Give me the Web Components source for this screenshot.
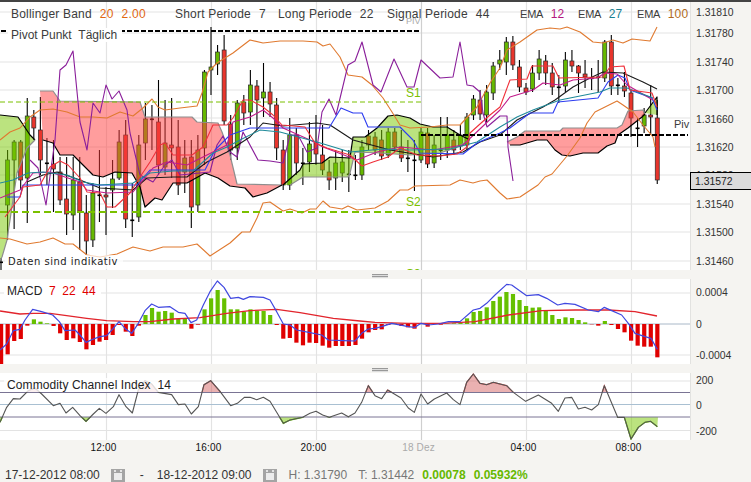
<!DOCTYPE html>
<html>
<head>
<meta charset="utf-8">
<title>Chart</title>
<style>
    html, body { margin: 0; background: #f5f4f1; }
</style>
</head>
<body>
<trade-screen>
    <chart-pane style="height:268px">
        <price-canvas></price-canvas>
        <chart-legend>
            <legend-group width="164" label="Bollinger Band" color="#e0660f" v1="20" v2="2.00"></legend-group>
            <legend-group width="103" label="Short Periode" v1="7"></legend-group>
            <legend-group width="109" label="Long Periode" v1="22"></legend-group>
            <legend-group width="133" label="Signal Periode" v1="44"></legend-group>
            <legend-group width="58" narrow label="EMA" color="#b4187e" v1="12"></legend-group>
            <legend-group width="59" narrow label="EMA" color="#1a8090" v1="27"></legend-group>
            <legend-group narrow label="EMA" color="#b06a22" v1="100"></legend-group>
        </chart-legend>
        <chart-label x="8" y="28" bg="#fff">Pivot Punkt &nbsp;Täglich</chart-label>
        <chart-label x="403" y="14" color="#aaa" size="9">PIV</chart-label>
        <chart-label x="403" y="86" color="#7ac000">S1</chart-label>
        <chart-label x="403" y="195" color="#7ac000">S2</chart-label>
        <chart-label x="403" y="267" color="#7ac000">S3</chart-label>
        <chart-label x="671" y="117" size="11">Piv</chart-label>
        <chart-label x="5" y="255" size="10" spacing="0.5" font="'DejaVu Sans'" bg="rgba(255,255,255,.7)" color="#222">Daten sind indikativ</chart-label>
        <axis-tick slot="axis" at="11">1.31810</axis-tick>
        <axis-tick slot="axis" at="32">1.31780</axis-tick>
        <axis-tick slot="axis" at="61">1.31740</axis-tick>
        <axis-tick slot="axis" at="89">1.31700</axis-tick>
        <axis-tick slot="axis" at="118">1.31660</axis-tick>
        <axis-tick slot="axis" at="146">1.31620</axis-tick>
        <axis-tick slot="axis" at="174">1.31580</axis-tick>
        <axis-tick slot="axis" at="203">1.31540</axis-tick>
        <axis-tick slot="axis" at="231">1.31500</axis-tick>
        <axis-tick slot="axis" at="260">1.31460</axis-tick>
        <price-marker slot="axis">1.31572</price-marker>
    </chart-pane>
    <pane-grip style="height:9px"></pane-grip>
    <chart-pane style="height:85px" top="279">
        <macd-canvas></macd-canvas>
        <chart-label x="4" y="284" top="279" size="12" color="#222" bg="#fff">MACD &nbsp;<red-val>7 &nbsp;22 &nbsp;44</red-val></chart-label>
        <axis-tick slot="axis" top="279" at="292">0.0004</axis-tick>
        <axis-tick slot="axis" top="279" at="324">0</axis-tick>
        <axis-tick slot="axis" top="279" at="355">-0.0004</axis-tick>
    </chart-pane>
    <pane-grip style="height:10px"></pane-grip>
    <chart-pane style="height:67px" top="374">
        <cci-canvas></cci-canvas>
        <chart-label x="4" y="379" top="374" size="12" spacing="0.1" color="#222" bg="rgba(255,255,255,.8)">Commodity Channel Index &nbsp;14</chart-label>
        <axis-tick slot="axis" top="374" at="380">200</axis-tick>
        <axis-tick slot="axis" top="374" at="405">0</axis-tick>
        <axis-tick slot="axis" top="374" at="431">-200</axis-tick>
    </chart-pane>
    <time-axis>
        <span>12:00</span><span>16:00</span><span>20:00</span><span class="day">18 Dez</span><span>04:00</span><span>08:00</span>
    </time-axis>
    <status-bar>
        <span>17-12-2012 08:00</span>
        <calendar-icon></calendar-icon>
        <span class="dash">-</span>
        <span>18-12-2012 09:00</span>
        <calendar-icon></calendar-icon>
        <span class="stat">H: 1.31790</span>
        <span class="stat low">T: 1.31442</span>
        <span class="up">0.00078</span>
        <span class="up pct">0.05932%</span>
    </status-bar>
</trade-screen>

<style>
    time-axis span { width: 105px; text-align: center; letter-spacing: .15px; }
    time-axis .day { color: #aaa; }
    status-bar .dash { margin: 0 13px 0 15px; }
    status-bar calendar-icon { margin-left: 11px; }
    status-bar .stat { color: #777; margin-left: 12px; }
    status-bar .stat.low { margin-left: 11px; }
    status-bar .up { color: #66b800; font-weight: bold; margin-left: 8px; }
    status-bar .pct { margin-left: 8px; }
    red-val { color: #e00000; }
</style>

<script>
const NS = 'http://www.w3.org/2000/svg'
const SANS = "'Liberation Sans', Arial, sans-serif"

// candles: body top, body bottom, wick top, wick bottom, g / r / d (doji)
const CANDLES = [
    [262,263,258,270,'d'],[160,205,150,240,'g'],[142,160,140,229,'g'],[142,180,140,190,'r'],[116,178,98,223,'g'],
    [117,128,110,140,'r'],[130,160,97,175,'r'],[163,164,138,185,'d'],[164,169,140,212,'r'],[172,200,157,205,'r'],
    [199,214,157,235,'r'],[180,215,157,230,'g'],[182,211,157,250,'r'],[213,241,195,255,'r'],[193,240,183,247,'g'],
    [195,196,150,222,'d'],[195,197,187,235,'r'],[179,190,160,208,'g'],[142,178,130,180,'g'],[135,219,120,228,'r'],
    [220,221,183,237,'d'],[145,217,135,222,'g'],[119,143,103,160,'g'],[119,120,105,150,'d'],[122,165,80,175,'r'],
    [143,167,100,175,'g'],[145,148,98,178,'r'],[147,185,120,195,'r'],[158,172,140,193,'g'],[157,207,140,228,'r'],
    [150,205,135,212,'g'],[72,148,70,165,'g'],[67,70,27,95,'g'],[52,64,45,75,'g'],[50,121,35,125,'r'],
    [124,150,115,160,'r'],[103,148,100,160,'g'],[102,113,95,125,'r'],[85,112,70,125,'g'],[86,100,80,130,'r'],
    [92,98,63,117,'g'],[92,104,82,117,'r'],[105,148,98,160,'r'],[150,185,140,190,'r'],[135,185,118,190,'g'],
    [135,163,128,175,'r'],[163,164,148,185,'d'],[144,162,122,172,'g'],[143,154,115,165,'r'],[155,170,125,175,'r'],
    [172,180,160,190,'r'],[163,178,150,190,'g'],[162,173,150,182,'g'],[174,175,150,192,'d'],[175,176,155,180,'d'],
    [147,175,140,180,'g'],[136,145,130,150,'r'],[137,150,132,155,'r'],[140,156,130,160,'r'],[132,155,128,158,'g'],
    [132,147,128,152,'r'],[147,158,130,162,'r'],[158,159,140,172,'d'],[160,161,140,191,'d'],[132,160,128,163,'g'],
    [133,164,128,168,'r'],[145,163,135,168,'g'],[150,151,117,160,'d'],[135,150,117,158,'g'],[140,150,130,155,'r'],
    [135,146,125,150,'g'],[117,145,113,150,'g'],[99,115,95,120,'g'],[100,114,90,120,'r'],[92,115,85,122,'g'],
    [66,93,62,100,'g'],[60,64,50,70,'g'],[42,62,37,75,'g'],[42,65,36,70,'r'],[67,87,60,92,'r'],
    [88,92,83,95,'r'],[73,89,65,92,'g'],[59,73,50,80,'g'],[61,73,55,85,'r'],[73,87,63,95,'r'],
    [87,88,75,103,'d'],[60,86,52,92,'g'],[61,66,50,72,'r'],[66,73,65,93,'r'],[74,77,60,88,'r'],
    [78,79,68,90,'d'],[77,78,60,92,'d'],[42,78,40,82,'g'],[42,86,35,95,'r'],[85,86,78,95,'d'],
    [86,91,72,97,'r'],[93,118,90,137,'r'],[128,129,118,147,'d'],[115,126,108,133,'g'],[115,117,85,135,'r'],
    [118,180,100,184,'r'],
]

const CLOUDS = {
    redA: '40,91 53,91 60,101 140,102 145,117 192,117 197,122 218,123 222,132 230,155 237,184 282,185 267,193 253,197 245,188 230,186 218,178 205,173 187,183 173,183 162,200 155,198 145,207 140,187 132,173 115,172 103,177 93,175 83,165 73,155 60,155 53,143 43,140',
    greenA: '283,185 300,170 303,164 322,163 330,157 350,158 353,137 365,137 377,128 388,116 397,115 410,118 420,124 433,127 447,127 460,135 470,140 455,148 440,153 410,155 380,153 355,152 350,173 348,177 303,177 290,185',
    greenB: '0,115 18,117 30,135 35,140 27,148 17,173 10,220 7,240 2,257 0,260',
    redB: '507,142 517,137 525,131 560,131 563,128 617,128 622,125 628,111 643,110 645,114 642,117 628,128 618,135 615,143 607,146 598,153 583,153 570,156 562,155 555,150 547,140 537,140 520,145 510,145',
    greenC: '645,113 657,97 657,115',
}

const LINES = [
    ['#e07a30', '0,140 10,132 20,128 30,117 40,110 53,109 67,112 80,117 93,117 107,118 120,112 133,116 143,108 152,99 158,107 165,110 180,108 197,106 202,93 208,72 217,63 233,53 250,40 263,43 280,41 303,41 317,42 323,46 330,44 340,57 348,75 362,77 372,85 383,98 392,112 400,125 410,128 430,127 447,125 460,125 477,107 490,83 500,68 507,50 520,42 537,30 550,28 560,29 567,27 580,32 593,42 603,43 613,40 623,43 632,39 650,41 657,27'],
    ['#e07a30', '0,238 10,239 27,244 40,242 53,238 65,244 73,244 87,255 100,257 117,254 133,247 150,251 163,247 183,247 197,244 210,256 230,243 242,232 250,232 257,218 263,203 270,202 283,211 290,209 302,213 310,209 316,209 323,201 330,207 342,209 348,206 357,210 375,208 388,201 400,190 408,190 415,186 450,185 460,180 473,183 480,181 487,180 500,193 507,199 520,197 538,185 545,177 552,174 567,156 580,138 587,123 595,112 603,108 617,101 623,105 633,112 643,125 653,137 655,147'],
    ['#8a1e9a', '30,160 38,168 46,205 55,140 60,70 66,65 73,51 80,122 87,150 93,103 100,113 106,85 112,99 119,91 127,110 130,133 140,175 153,182 165,165 172,160 180,175 200,173 210,172 217,145 223,136 230,152 237,157 243,132 258,160 270,161 283,163 290,135 298,135 307,152 317,148 322,112 329,99 336,115 348,65 355,61 362,42 373,85 381,92 394,59 407,87 414,87 421,60 440,78 453,77 460,42 467,85 473,86 480,92 483,113 487,127 500,116 507,116 508,147 513,181'],
    ['#1a1a1a', '27,182 43,175 57,172 80,180 100,188 133,190 147,178 173,177 187,177 207,162 227,152 250,137 263,123 283,126 317,123 330,125 353,140 390,150 433,157 463,152 480,142 500,135 517,120 543,107 555,100 573,87 590,78 603,72 623,73 643,82 657,89'],
    ['#2c3cf0', '7,197 20,197 23,185 137,185 150,170 205,170 215,150 230,135 250,128 329,128 341,108 353,113 362,113 368,127 400,127 413,140 420,153 463,154 477,143 500,133 510,128 530,113 553,113 558,102 598,98 608,82 618,75 625,78 630,90 652,98 657,110'],
    ['#c01a8a', '0,198 20,190 33,173 50,172 80,182 87,190 107,193 133,192 153,168 167,162 187,165 207,155 227,145 233,122 250,117 263,110 273,118 283,128 310,140 323,147 357,160 377,152 400,147 433,150 463,145 500,110 510,97 533,90 543,83 560,85 573,80 597,78 605,73 617,74 627,85 653,100'],
    ['#1f8a9a', '0,183 13,180 28,173 43,172 67,175 83,182 100,185 133,183 150,173 173,171 193,171 213,153 227,147 240,140 260,130 280,132 317,142 350,152 383,149 410,150 450,149 477,142 500,127 517,117 533,110 560,100 600,92 610,88 627,88 653,98'],
    ['#f0303a', '5,217 20,197 23,187 40,185 50,167 60,161 68,165 80,178 87,192 100,193 107,207 115,207 130,193 140,177 150,162 160,145 165,143 173,155 192,155 203,147 213,125 227,125 233,118 243,100 250,100 263,107 273,115 282,125 305,127 315,143 327,148 350,155 362,166 373,162 388,157 400,148 417,155 440,156 457,154 467,147 470,133 490,115 500,107 510,80 527,79 532,66 553,66 559,78 603,77 610,67 624,66 630,90 652,93 657,107'],
]

const MACD_BARS = [-120,-91,-51,-45,-5,14,7,2,-6,-28,-48,-43,-54,-76,-63,-53,-48,-33,-3,-23,-36,-5,27,48,37,39,34,15,16,-14,-2,44,77,102,77,44,44,37,44,40,39,27,-3,-44,-42,-56,-64,-56,-57,-65,-71,-66,-66,-66,-63,-44,-25,-18,-16,-3,2,-6,-10,-14,1,-8,2,-2,1,2,3,17,36,39,50,69,82,96,90,72,54,49,50,42,27,15,20,18,12,5,-1,-5,9,-3,-15,-25,-50,-65,-68,-68,-100]

// the lower panes were read off at 3x, so keep those numbers and scale them
const zoomed = (pts, left, baseY) => pts.map(([x, y]) => `${left + x / 3},${baseY + y / 3}`).join(' ')

const MACD_LINE = zoomed([[0,240],[20,222],[40,182],[60,178],[75,150],[98,118],[125,125],[158,135],[178,155],[195,182],[225,180],[240,195],[258,217],[280,207],[300,200],[320,197],[340,175],[357,155],[378,178],[395,190],[415,160],[435,122],[455,102],[475,112],[510,110],[535,127],[555,130],[573,158],[590,150],[610,105],[630,65],[652,33],[672,52],[692,85],[715,82],[730,88],[750,80],[790,82],[810,90],[830,125],[850,162],[870,165],[890,180],[930,188],[965,195],[985,210],[1030,212],[1065,213],[1085,190],[1105,177],[1125,175],[1145,170],[1175,160],[1225,170],[1245,172],[1263,160],[1285,165],[1315,162],[1345,155],[1380,155],[1420,120],[1440,115],[1460,100],[1485,75],[1520,43],[1535,45],[1580,77],[1615,74],[1640,85],[1673,105],[1695,100],[1725,103],[1765,120],[1795,125],[1813,112],[1835,122],[1865,135],[1885,160],[1905,190],[1935,200],[1953,205],[1972,238]], 0, 270)
const MACD_SIGNAL = zoomed([[0,123],[60,132],[100,130],[150,130],[200,137],[260,145],[320,152],[400,155],[450,155],[520,147],[600,143],[680,130],[750,122],[830,118],[900,128],[1000,145],[1080,153],[1125,157],[1225,160],[1325,160],[1425,155],[1525,135],[1625,122],[1725,120],[1825,120],[1905,125],[1971,138]], 0, 270)
const CCI_LINE = [[0,175],[20,130],[40,104],[60,105],[85,80],[105,72],[125,90],[160,125],[180,118],[198,147],[218,130],[240,155],[258,172],[280,150],[298,133],[318,148],[340,128],[357,92],[378,128],[397,147],[415,78],[435,50],[455,60],[475,85],[515,92],[535,122],[555,120],[574,150],[595,128],[612,62],[632,50],[660,82],[692,125],[712,118],[733,100],[750,100],[770,107],[790,100],[810,112],[830,145],[850,178],[870,168],[908,160],[930,148],[948,142],[968,153],[988,160],[1025,147],[1045,158],[1065,147],[1085,115],[1105,65],[1125,95],[1145,104],[1163,78],[1183,90],[1203,102],[1225,132],[1243,145],[1263,90],[1283,120],[1303,105],[1340,87],[1360,107],[1380,122],[1400,55],[1420,30],[1440,58],[1460,62],[1480,55],[1520,65],[1540,85],[1577,112],[1615,93],[1655,118],[1675,142],[1695,102],[1715,100],[1735,135],[1755,130],[1775,138],[1795,122],[1813,65],[1853,160],[1873,160],[1893,225],[1915,190],[1935,175],[1952,172],[1972,188]]

function gridLines(top, bottom, rows) {
    let out = ''
    for (const y of rows) {
        out += `<line x1="0" x2="690" y1="${y}" y2="${y}" stroke="#e3e3e3" stroke-width="1.2"/>`
    }
    for (const x of [106, 211, 316, 421, 526, 631]) {
        const stroke = x === 421 ? '#cfcfcf' : '#e3e3e3'
        out += `<line x1="${x + 0.5}" x2="${x + 0.5}" y1="${top}" y2="${bottom}" stroke="${stroke}" stroke-width="1.2"/>`
    }
    return out
}

function svgBox(top, height, content) {
    return `<style>:host { display: block; width: 690px; height: ${height}px; } svg { display: block; }</style>
    <svg xmlns="${NS}" width="690" height="${height}" viewBox="0 ${top} 690 ${height}">${content}</svg>`
}

const line = (pts, stroke, w = 1.1) => `<polyline points="${pts}" fill="none" stroke="${stroke}" stroke-width="${w}" stroke-linejoin="round"/>`

class PriceCanvas extends HTMLElement {
    connectedCallback() {
        let body = gridLines(2, 270, [12, 33, 62, 90, 118, 147, 175, 204, 232, 261])

        CANDLES.forEach(([top, bottom, high, low, kind], i) => {
            const x = 1 + i * 6.5625
            body += `<line x1="${x}" x2="${x}" y1="${high}" y2="${low}" stroke="#000" stroke-width="1.1"/>`
            if (kind === 'd') {
                body += `<rect x="${x - 2}" y="${top - 0.5}" width="4" height="1.6" fill="#000"/>`
            } else {
                const fill = kind === 'g' ? '#66b800' : '#e8352c'
                body += `<rect x="${x - 2}" y="${top}" width="4" height="${bottom - top}" fill="${fill}" stroke="#2a2a2a" stroke-width="0.7"/>`
            }
        })

        const red = 'rgba(255,60,60,.5)'
        const green = 'rgba(120,200,0,.5)'
        for (const [name, pts] of Object.entries(CLOUDS)) {
            const isRed = name.startsWith('red')
            body += `<polygon points="${pts}" fill="${isRed ? red : green}"/>`
            const half = pts.split(' ')
            const cut = isRed ? half.findIndex(p => p.startsWith('282,') || p.startsWith('645,')) + 1 : half.findIndex(p => p.startsWith('470,') || p.startsWith('657,115') || p.startsWith('35,')) + 1
            body += line(half.slice(0, cut).join(' '), isRed ? '#8e8e8e' : '#000', 1.2)
            body += line(half.slice(cut - 1).join(' '), isRed ? '#000' : '#8e8e8e', 1.2)
        }

        for (const [stroke, pts] of LINES) {
            body += line(pts, stroke)
        }

        body += `<line x1="0" x2="421" y1="102" y2="102" stroke="#7ac000" stroke-width="1" stroke-dasharray="5 3"/>`
        body += `<line x1="0" x2="421" y1="212" y2="212" stroke="#7ac000" stroke-width="2" stroke-dasharray="7 4"/>`
        body += `<line x1="1" x2="421" y1="31" y2="31" stroke="#000" stroke-width="2" stroke-dasharray="5 2"/>`
        body += `<line x1="421" x2="688" y1="135" y2="135" stroke="#000" stroke-width="2" stroke-dasharray="5 2"/>`

        this.attachShadow({ mode: 'open' }).innerHTML = svgBox(2, 268, body)
    }
}

class MacdCanvas extends HTMLElement {
    connectedCallback() {
        let body = gridLines(279, 364, [293, 355])
        body += `<line x1="0" x2="690" y1="324" y2="324" stroke="#a9b8c8" stroke-width="1"/>`
        MACD_BARS.forEach((v, i) => {
            const x = 1 + i * 6.5625
            const h = Math.abs(v) / 3
            const y = v < 0 ? 324 : 324 - h
            body += `<rect x="${x - 2}" y="${y}" width="4.2" height="${h}" fill="${v < 0 ? '#e00000' : '#66c000'}"/>`
        })
        body += line(MACD_SIGNAL, '#e2242c', 1.3)
        body += line(MACD_LINE, '#4048e0', 1.2)
        this.attachShadow({ mode: 'open' }).innerHTML = svgBox(279, 85, body)
    }
}

class CciCanvas extends HTMLElement {
    connectedCallback() {
        let body = gridLines(374, 441, [382, 431.5])
        const pts = zoomed(CCI_LINE, 0, 365)
        const hi = 393.5
        const lo = 418
        const first = `0,${hi}`
        const last = `658,${hi}`
        body += `<defs><clipPath id="above"><rect x="0" y="374" width="690" height="${hi - 374}"/></clipPath>
            <clipPath id="below"><rect x="0" y="${lo}" width="690" height="${441 - lo}"/></clipPath></defs>`
        body += `<polygon clip-path="url(#above)" points="${first} ${pts} ${last}" fill="rgba(205,70,70,.42)"/>`
        body += `<polyline clip-path="url(#above)" points="${pts}" fill="none" stroke="#d05a5a" stroke-width="1.2"/>`
        body += `<polygon clip-path="url(#below)" points="0,${lo} ${pts} 658,${lo}" fill="rgba(120,200,0,.5)"/>`
        body += `<polyline clip-path="url(#below)" points="${pts}" fill="none" stroke="#66c000" stroke-width="1.3"/>`
        body += `<line x1="0" x2="690" y1="${hi}" y2="${hi}" stroke="#7a7494" stroke-width="1"/>`
        body += `<line x1="0" x2="690" y1="405.5" y2="405.5" stroke="#a9c0d2" stroke-width="1"/>`
        body += `<line x1="0" x2="690" y1="${lo}" y2="${lo}" stroke="#7a7494" stroke-width="1"/>`
        body += line(pts, '#555', 1.1)
        this.attachShadow({ mode: 'open' }).innerHTML = svgBox(374, 67, body)
    }
}

const templatePane = document.createElement('template')
templatePane.innerHTML = `
<style>
    :host { display: flex; position: relative; }
    #plot { position: relative; width: 690px; flex: none; background: #fff; box-shadow: 1px 0 0 #e2e2e0; overflow: hidden; }
    #axis { position: relative; flex: 1; }
</style>
<div id="plot"><slot></slot></div>
<div id="axis"><slot name="axis"></slot></div>
`

class ChartPane extends HTMLElement {
    connectedCallback() {
        this.attachShadow({ mode: 'open' }).appendChild(templatePane.content.cloneNode(true))
    }
}

class TradeScreen extends HTMLElement {
    connectedCallback() {
        this.attachShadow({ mode: 'open' }).innerHTML = `
        <style>
            :host { display: flex; flex-direction: column; width: 751px; height: 482px; overflow: hidden;
                border-top: 2px solid #444; box-sizing: border-box; font-family: ${SANS}; }
        </style>
        <slot></slot>`
    }
}

class PaneGrip extends HTMLElement {
    connectedCallback() {
        this.attachShadow({ mode: 'open' }).innerHTML = `
        <style>
            :host { display: flex; justify-content: center; align-items: flex-end; width: 690px; }
            div { width: 16px; height: 4px; margin-bottom: 1px; margin-left: 70px;
                background: repeating-linear-gradient(#999 0 1px, #ddd 1px 2px); }
        </style>
        <div></div>`
    }
}

class ChartLegend extends HTMLElement {
    connectedCallback() {
        this.attachShadow({ mode: 'open' }).innerHTML = `
        <style>
            :host { position: absolute; left: 11px; top: 5px; display: flex; white-space: nowrap;
                font-size: 12px; color: #3c3c3c; }
        </style>
        <slot></slot>`
    }
}

class LegendGroup extends HTMLElement {
    connectedCallback() {
        const w = this.getAttribute('width')
        const color = this.getAttribute('color') || '#3c3c3c'
        const narrow = this.hasAttribute('narrow')
        const values = [this.getAttribute('v1'), this.getAttribute('v2')].filter(Boolean)
        this.attachShadow({ mode: 'open' }).innerHTML = `
        <style>
            :host { display: flex; align-items: baseline; gap: ${narrow ? 7.5 : 8}px; ${w ? `width: ${w}px;` : ''} flex: none; letter-spacing: .2px; }
            span { ${narrow ? 'font-size: 11px; letter-spacing: -.2px;' : ''} }
            b { font-weight: normal; color: ${color}; }
        </style>
        <span>${this.getAttribute('label')}</span>${values.map(v => `<b>${v}</b>`).join('')}`
    }
}

// free labels that sit over the plot; y is given in page coordinates
class ChartLabel extends HTMLElement {
    connectedCallback() {
        const paneTop = Number(this.getAttribute('top') || 2)
        const font = this.getAttribute('font')
        this.attachShadow({ mode: 'open' }).innerHTML = `
        <style>
            :host { position: absolute; left: ${this.getAttribute('x')}px; top: ${this.getAttribute('y') - paneTop}px;
                padding: 0 5px 0 3px; white-space: nowrap; line-height: 14px;
                letter-spacing: ${this.getAttribute('spacing') || 0}px;
                font-size: ${this.getAttribute('size') || 12}px;
                ${font ? `font-family: ${font}, sans-serif;` : ''}
                color: ${this.getAttribute('color') || '#3c3c3c'};
                background: ${this.getAttribute('bg') || 'transparent'}; }
        </style>
        <slot></slot>`
    }
}

class AxisTick extends HTMLElement {
    connectedCallback() {
        const paneTop = Number(this.getAttribute('top') || 2)
        this.attachShadow({ mode: 'open' }).innerHTML = `
        <style>
            :host { position: absolute; left: 6px; top: ${this.getAttribute('at') - paneTop - 5.5}px; line-height: 14px;
                font-size: 10.4px; color: #333; white-space: nowrap; }
        </style>
        <slot></slot>`
    }
}

class PriceMarker extends HTMLElement {
    connectedCallback() {
        this.attachShadow({ mode: 'open' }).innerHTML = `
        <style>
            :host { position: absolute; left: 0; top: 170px; width: 61px; height: 18px; box-sizing: border-box;
                border: 1px solid #000; border-right: 0; background: #dcdcdc; padding-left: 4px; line-height: 18px;
                font-size: 10.4px; color: #222; }
        </style>
        <slot></slot>`
    }
}

class TimeAxis extends HTMLElement {
    connectedCallback() {
        this.attachShadow({ mode: 'open' }).innerHTML = `
        <style>
            :host { display: flex; height: 16px; padding-left: 51px; font-size: 10px; line-height: 16px; color: #111; align-items: center; }
        </style>
        <slot></slot>`
    }
}

class StatusBar extends HTMLElement {
    connectedCallback() {
        this.attachShadow({ mode: 'open' }).innerHTML = `
        <style>
            :host { display: flex; align-items: center; height: 14px; margin-top: 12px; padding-left: 5px; font-size: 12px; color: #333; white-space: nowrap; }
        </style>
        <slot></slot>`
    }
}

class CalendarIcon extends HTMLElement {
    connectedCallback() {
        this.attachShadow({ mode: 'open' }).innerHTML = `
        <style>:host { display: inline-flex; flex: none; } svg { display: block; }</style>
        <svg width="14" height="13" viewBox="0 0 14 13">
            <rect width="14" height="13" fill="#a4a4a4"/>
            <rect x="3" y="4" width="8" height="7" fill="#ececec"/>
            <rect x="3" y="1" width="2" height="2" fill="#e4e4e4"/>
            <rect x="9" y="1" width="2" height="2" fill="#e4e4e4"/>
        </svg>`
    }
}

customElements.define('trade-screen', TradeScreen)
customElements.define('chart-pane', ChartPane)
customElements.define('price-canvas', PriceCanvas)
customElements.define('macd-canvas', MacdCanvas)
customElements.define('cci-canvas', CciCanvas)
customElements.define('pane-grip', PaneGrip)
customElements.define('chart-legend', ChartLegend)
customElements.define('legend-group', LegendGroup)
customElements.define('chart-label', ChartLabel)
customElements.define('axis-tick', AxisTick)
customElements.define('price-marker', PriceMarker)
customElements.define('time-axis', TimeAxis)
customElements.define('status-bar', StatusBar)
customElements.define('calendar-icon', CalendarIcon)
</script>
</body>
</html>
